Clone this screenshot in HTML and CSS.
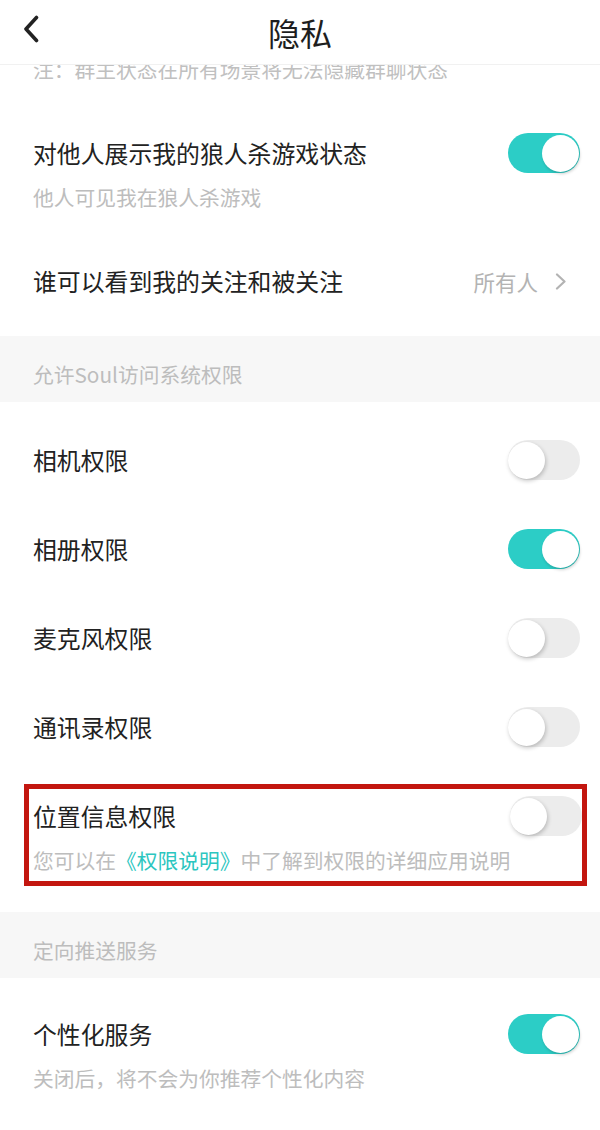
FILE: index.html
```html
<!DOCTYPE html>
<html lang="zh-CN">
<head>
<meta charset="utf-8">
<title>隐私</title>
<link rel="stylesheet" href="styles.css">
</head>
<body>
<div class="page">
  <header class="header">
    <span class="back">
      <svg width="16" height="28" viewBox="0 0 16 28"><path d="M13.5 2.5 L3 14 L13.5 25.5" fill="none" stroke="#222" stroke-width="3.6" stroke-linecap="round" stroke-linejoin="round"/></svg>
    </span>
    <h1 class="title">隐私</h1>
    <span class="spacer"></span>
  </header>

  <div class="group group-first">
    <div class="note-clip"><p class="note">注：群主状态在所有场景将无法隐藏群聊状态</p></div>
    <div class="row">
      <div class="row-text">
        <div class="row-title">对他人展示我的狼人杀游戏状态</div>
        <div class="row-sub">他人可见我在狼人杀游戏</div>
      </div>
      <span class="toggle on"><span class="knob"></span></span>
    </div>
    <div class="row">
      <div class="row-text">
        <div class="row-title">谁可以看到我的关注和被关注</div>
      </div>
      <span class="value">所有人
        <svg class="chev" width="12" height="17" viewBox="0 0 12 17"><path d="M2 1.5 L9.5 8.5 L2 15.5" fill="none" stroke="#b3b3b3" stroke-width="2.2" stroke-linecap="round" stroke-linejoin="round"/></svg>
      </span>
    </div>
  </div>

  <div class="section">允许Soul访问系统权限</div>

  <div class="group">
    <div class="row">
      <div class="row-text"><div class="row-title">相机权限</div></div>
      <span class="toggle"><span class="knob"></span></span>
    </div>
    <div class="row">
      <div class="row-text"><div class="row-title">相册权限</div></div>
      <span class="toggle on"><span class="knob"></span></span>
    </div>
    <div class="row">
      <div class="row-text"><div class="row-title">麦克风权限</div></div>
      <span class="toggle"><span class="knob"></span></span>
    </div>
    <div class="row">
      <div class="row-text"><div class="row-title">通讯录权限</div></div>
      <span class="toggle"><span class="knob"></span></span>
    </div>
    <div class="row highlight">
      <div class="row-text">
        <div class="row-title">位置信息权限</div>
        <div class="row-sub">您可以在<span class="link">《权限说明》</span>中了解到权限的详细应用说明</div>
      </div>
      <span class="toggle"><span class="knob"></span></span>
      <span class="mark"></span>
    </div>
  </div>

  <div class="section">定向推送服务</div>

  <div class="group group-last">
    <div class="row">
      <div class="row-text">
        <div class="row-title">个性化服务</div>
        <div class="row-sub">关闭后，将不会为你推荐个性化内容</div>
      </div>
      <span class="toggle on"><span class="knob"></span></span>
    </div>
  </div>
</div>
</body>
</html>
```

FILE: styles.css
```css
* { box-sizing: border-box; }
html, body { margin: 0; padding: 0; background: #fff; }
body {
  font-family: "Noto Sans CJK SC", "Noto Sans", sans-serif;
  color: #222;
}
.page { width: 600px; height: 1130px; overflow: hidden; background: #fff; }

.header {
  height: 65px;
  display: grid;
  grid-template-columns: 80px 1fr 80px;
  align-items: center;
  border-bottom: 1px solid #f1f1f1;
  background: #fff;
}
.back { align-self: start; padding: 15px 0 0 23px; display: block; height: 64px; }
.back svg { display: block; }
.title {
  margin: 0;
  text-align: center;
  font-size: 32px;
  font-weight: 400;
  line-height: 40px;
  color: #1e1e1e;
}

.group { background: #fff; padding: 15px 0 11px; }
.group-first { padding: 0 0 9px; }
.group-last { padding-top: 13px; }

.note-clip { height: 45px; overflow: hidden; }
.note {
  margin: -10px 0 0;
  padding-left: 33px;
  font-size: 20.75px;
  line-height: 28px;
  color: #c0c0c0;
  white-space: nowrap;
}

.row {
  display: flex;
  align-items: flex-start;
  justify-content: space-between;
  padding: 26px 20px 29px 33px;
}
.row-title { font-size: 23.85px; line-height: 34px; color: #222; }
.row-sub { margin: 13px 0 -2px; font-size: 20.75px; line-height: 28px; color: #bdbdbd; white-space: nowrap; }
.link { color: #2cc6c0; }

.value {
  display: flex;
  align-items: center;
  height: 34px;
  padding-right: 13px;
  font-size: 21.5px;
  color: #b3b3b3;
}
.chev { margin-left: 17px; display: block; }

.toggle {
  position: relative;
  flex: none;
  width: 72px;
  height: 40px;
  margin: -3px 0;
  border-radius: 20px;
  background: #ececec;
}
.toggle .knob {
  position: absolute;
  top: 2px;
  left: 0;
  width: 37px;
  height: 37px;
  border-radius: 50%;
  background: #fff;
  box-shadow: 1px 2px 4px rgba(0, 0, 0, 0.22);
}
.toggle.on { background: #2ccdc6; }
.toggle.on .knob { left: auto; right: 1px; box-shadow: 1px 2px 3px rgba(0, 0, 0, 0.18); }

.section {
  background: #f7f7f7;
  padding: 24px 33px 14px;
  font-size: 20.75px;
  line-height: 28px;
  color: #bdbdbd;
}

.highlight { position: relative; }
.mark {
  position: absolute;
  top: 11px;
  left: 24px;
  right: 13px;
  bottom: 15px;
  border: 5px solid #c3160f;
  pointer-events: none;
}
```
